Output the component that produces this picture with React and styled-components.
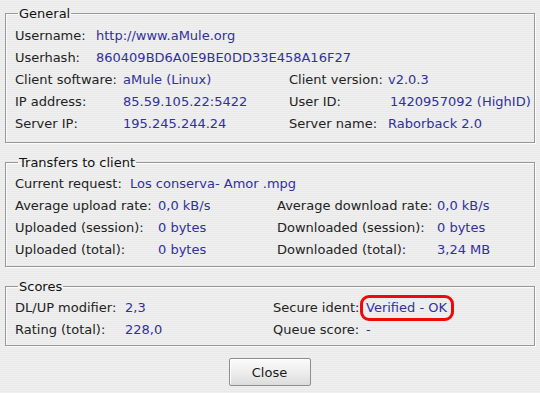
import React from "react";
import styled, { createGlobalStyle } from "styled-components";

const Global = createGlobalStyle`
  html, body {
    margin: 0;
    padding: 0;
  }
  body {
    width: 540px;
    height: 393px;
    overflow: hidden;
    font-family: "DejaVu Sans", "Liberation Sans", sans-serif;
    font-size: 13px;
    color: #1c1c1c;
    background: repeating-linear-gradient(to bottom, #f0f0f0 0px, #f0f0f0 1px, #e9e9e9 1px, #e9e9e9 2px);
  }
`;

const Dialog = styled.div`
  display: flex;
  flex-direction: column;
  padding: 6px 5px 0 5px;
`;

const Frame = styled.fieldset`
  margin: ${(p) => (p.$first ? "0" : "12px")} 0 0 0;
  padding: ${(p) => p.$pt}px 9px ${(p) => p.$pb}px 9px;
  border: 1px solid #989898;
  box-shadow: inset 1px 1px 0 #fbfbfb, 1px 1px 0 #fbfbfb;
  border-radius: 0;
  min-width: 0;
`;

const Legend = styled.legend`
  padding: 0 1px;
  margin-left: 3px;
  line-height: 15px;
  color: #111;
`;

const Row = styled.div`
  display: flex;
  height: 22px;
  line-height: 22px;
  white-space: nowrap;
`;

const Label = styled.span`
  width: ${(p) => p.$w}px;
  flex: none;
  color: #222;
`;

const Value = styled.span`
  color: #30309a;
  width: ${(p) => (p.$w ? `${p.$w}px` : "auto")};
  flex: none;
`;

const Highlight = styled.span`
  color: #30309a;
  outline: 3.5px solid #ee0a0a;
  outline-offset: 2px;
  border-radius: 4px;
  line-height: 16px;
  align-self: center;
  padding: 0 2px 0 1px;
  margin-left: -1px;
`;

const Footer = styled.div`
  display: flex;
  justify-content: center;
  margin-top: 12px;
`;

const Button = styled.button`
  width: 82px;
  height: 28px;
  margin-left: -1px;
  font-family: "DejaVu Sans", "Liberation Sans", sans-serif;
  font-size: 13px;
  color: #1a1a1a;
  border: 1px solid #8e8e8e;
  border-radius: 2px;
  background: linear-gradient(to bottom, #fbfbfb 0%, #eeeeee 50%, #dcdcdc 100%);
  box-shadow: inset 1px 1px 0 #ffffff;
  padding: 0;
`;

export default function App() {
  return (
    <>
      <Global />
      <Dialog>
        <Frame $first $pt={4} $pb={7}>
          <Legend>General</Legend>
          <Row>
            <Label $w={81}>Username:</Label>
            <Value>http://www.aMule.org</Value>
          </Row>
          <Row>
            <Label $w={81}>Userhash:</Label>
            <Value>860409BD6A0E9BE0DD33E458A16F27</Value>
          </Row>
          <Row>
            <Label $w={108}>Client software:</Label>
            <Value $w={166}>aMule (Linux)</Value>
            <Label $w={99}>Client version:</Label>
            <Value>v2.0.3</Value>
          </Row>
          <Row>
            <Label $w={108}>IP address:</Label>
            <Value $w={166}>85.59.105.22:5422</Value>
            <Label $w={101}>User ID:</Label>
            <Value>1420957092 (HighID)</Value>
          </Row>
          <Row>
            <Label $w={108}>Server IP:</Label>
            <Value $w={166}>195.245.244.24</Value>
            <Label $w={99}>Server name:</Label>
            <Value>Raborback 2.0</Value>
          </Row>
        </Frame>

        <Frame $pt={3} $pb={5}>
          <Legend>Transfers to client</Legend>
          <Row>
            <Label $w={115}>Current request:</Label>
            <Value>Los conserva- Amor .mpg</Value>
          </Row>
          <Row>
            <Label $w={143}>Average upload rate:</Label>
            <Value $w={119}>0,0 kB/s</Value>
            <Label $w={160}>Average download rate:</Label>
            <Value>0,0 kB/s</Value>
          </Row>
          <Row>
            <Label $w={143}>Uploaded (session):</Label>
            <Value $w={119}>0 bytes</Value>
            <Label $w={160}>Downloaded (session):</Label>
            <Value>0 bytes</Value>
          </Row>
          <Row>
            <Label $w={143}>Uploaded (total):</Label>
            <Value $w={119}>0 bytes</Value>
            <Label $w={160}>Downloaded (total):</Label>
            <Value>3,24 MB</Value>
          </Row>
        </Frame>

        <Frame $pt={3} $pb={4}>
          <Legend>Scores</Legend>
          <Row>
            <Label $w={110}>DL/UP modifier:</Label>
            <Value $w={148}>2,3</Value>
            <Label $w={93}>Secure ident:</Label>
            <Highlight>Verified - OK</Highlight>
          </Row>
          <Row>
            <Label $w={110}>Rating (total):</Label>
            <Value $w={148}>228,0</Value>
            <Label $w={93}>Queue score:</Label>
            <Value>-</Value>
          </Row>
        </Frame>

        <Footer>
          <Button>Close</Button>
        </Footer>
      </Dialog>
    </>
  );
}
